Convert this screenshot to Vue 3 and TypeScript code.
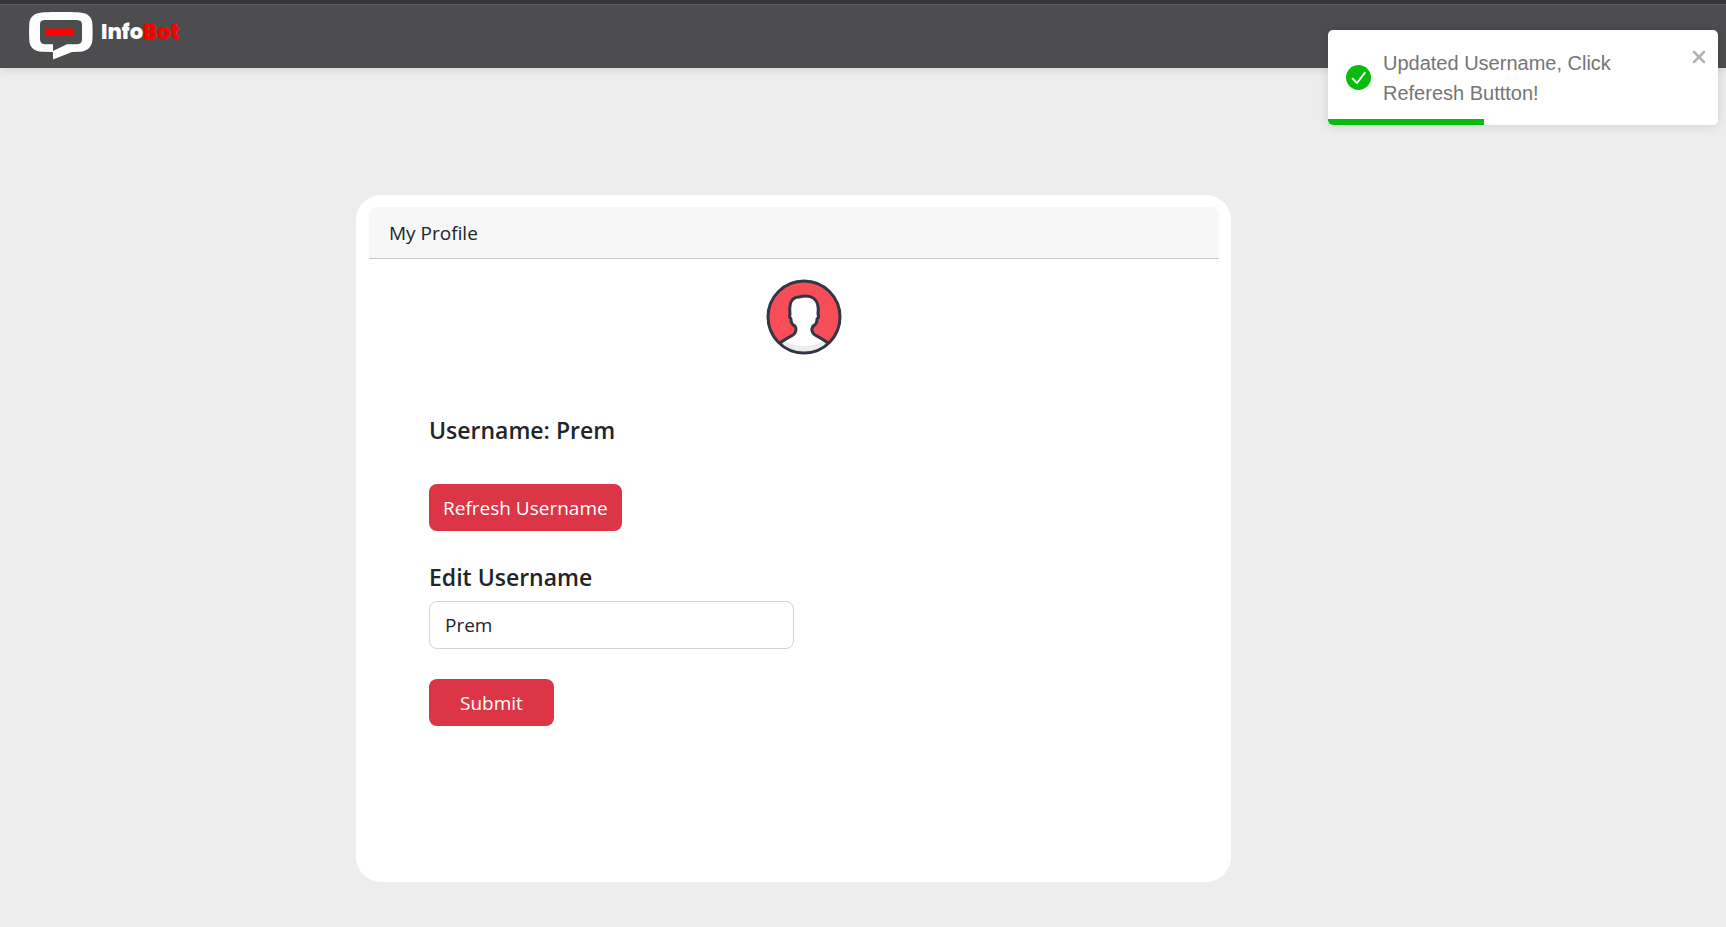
<script setup lang="ts">
import { ref } from 'vue'

const username = ref('Prem')
const draft = ref('Prem')
const toastOpen = ref(true)
const progress = ref(40)

function refreshUsername() {
  username.value = draft.value
}

function submit() {
  toastOpen.value = true
}
</script>

<template>
  <div class="page">
    <header class="navbar">
      <a class="brand" href="#" aria-label="InfoBot">
        <svg class="brand-mark" viewBox="0 0 64 48" aria-hidden="true">
          <path
            fill="#fff"
            fill-rule="evenodd"
            d="M13 0.5C20 -0.2 44 -0.2 51 0.5C59 1.200 63 5 63.400 12C63.700 17 63.700 23 63.400 28C63 35 58 39.500 51 39.800L43 40L24 47.500V40L13 39.800C5 39.500 0.500 35 0.300 28C0 23 0 17 0.300 12C0.700 5 5 1.200 13 0.500ZM15.500 8C12 8.300 11.200 9.500 11 13V27C11.200 30.500 12.500 32 16 32.200H24V39L38 32.200H48C51.500 32 53 30.500 53 27V13C53 9.500 51.500 8.300 48 8Z"
          />
          <rect x="16" y="16.500" width="29" height="7" rx="1" fill="#f00" />
        </svg>
        <span class="brand-name">Info<span class="brand-accent">Bot</span></span>
      </a>
    </header>

    <main class="content">
      <section class="card">
        <h1 class="card-header">My Profile</h1>
        <div class="avatar-row">
          <svg class="avatar" viewBox="0 0 76 76" role="img" aria-label="Profile picture">
            <defs>
              <clipPath id="avatar-disc"><circle cx="38" cy="38" r="36" /></clipPath>
            </defs>
            <g clip-path="url(#avatar-disc)">
              <rect width="76" height="76" fill="#f74d56" />
              <path d="M2 38A36 29 0 0 0 74 38V76H2Z" fill="#e64954" opacity="0.45" />
              <path
                class="figure"
                d="M13 65C17 61 22 59 27 56C30 54 31 50 29 47C26 46 25 43 25 40C23 38 23.500 36 24 35C23 25 25 18 33 18C45 15 54 19 52 35C53 37 52.500 39 51 40C51 43 50 46 47 47C45 51 46 54 49 56C54 59 59 61 63 65L55 78H20Z"
              />
              <path d="M13 65L17 61C30 69 46 69 59 61L63 65L55 77H20Z" fill="#ededee" />
              <path
                class="outline"
                d="M13 65C17 61 22 59 27 56C30 54 31 50 29 47C26 46 25 43 25 40C23 38 23.500 36 24 35C23 25 25 18 33 18C45 15 54 19 52 35C53 37 52.500 39 51 40C51 43 50 46 47 47C45 51 46 54 49 56C54 59 59 61 63 65"
              />
            </g>
            <circle class="outline" cx="38" cy="38" r="36" />
          </svg>
        </div>

        <form class="profile" @submit.prevent="submit">
          <h2 class="heading">Username: {{ username }}</h2>
          <button class="btn refresh" type="button" @click="refreshUsername">Refresh Username</button>
          <label class="heading" for="username">Edit Username</label>
          <input id="username" v-model="draft" class="field" type="text" autocomplete="off" />
          <button class="btn wide" type="submit">Submit</button>
        </form>
      </section>
    </main>

    <div v-if="toastOpen" class="toast" role="alert">
      <svg class="toast-icon" viewBox="0 0 24 24" aria-hidden="true">
        <circle cx="12" cy="12" r="12" fill="#07bc0c" />
        <path d="M6.300 13.200L10.600 17.300L18 7.500" fill="none" stroke="#fff" stroke-width="1.800" stroke-linecap="round" stroke-linejoin="round" />
      </svg>
      <p class="toast-text">Updated Username, Click Referesh Buttton!</p>
      <button class="toast-close" type="button" aria-label="Close" @click="toastOpen = false">
        <svg viewBox="0 0 14 14" aria-hidden="true">
          <path d="M2 2L12 12M12 2L2 12" stroke="#b3b3b3" stroke-width="2.600" stroke-linecap="round" />
        </svg>
      </button>
      <div class="toast-progress" :style="{ width: progress + '%' }"></div>
    </div>
  </div>
</template>

<style>
body {
  background: #ededed;
}
</style>

<style scoped>
.page {
  min-height: 100vh;
  box-sizing: border-box;
  font-family: "Segoe UI", "Open Sans", "Noto Sans", sans-serif;
  font-size: 19px;
  line-height: 30px;
  color: #212529;
}

.navbar {
  box-sizing: border-box;
  height: 68px;
  padding: 8px 29px 0;
  display: flex;
  align-items: flex-start;
  background: #4d4d4f;
  border-top: 4px solid #35363a;
  box-shadow: inset 0 1px #5c5d60, 0 2px 8px rgba(0, 0, 0, 0.1);
}

.brand {
  display: flex;
  gap: 8px;
  text-decoration: none;
}

.brand-mark {
  width: 64px;
  height: 48px;
}

.brand-name {
  padding-top: 5px;
  font-family: Poppins, Inter, sans-serif;
  font-size: 21px;
  font-weight: 800;
  line-height: 30px;
  color: #fff;
}

.brand-accent {
  color: #f00;
}

.content {
  display: flex;
  justify-content: center;
  padding: 127px 139px 45px 0;
}

.card {
  box-sizing: border-box;
  width: 875px;
  max-width: 100%;
  padding: 12px 12px 156px 13px;
  background: #fff;
  border-radius: 25px;
}

.card-header {
  margin: 0;
  padding: 11px 20px 10px;
  font-size: 19px;
  font-weight: 400;
  line-height: 30px;
  background: #f7f7f7;
  border-bottom: 1px solid #c8c8c8;
  border-radius: 8px 8px 0 0;
}

.avatar-row {
  display: flex;
  justify-content: center;
  padding: 20px 0 0 20px;
}

.avatar {
  width: 76px;
  height: 76px;
}

.outline {
  fill: none;
  stroke: #303645;
  stroke-width: 3;
  stroke-linejoin: round;
}

.figure {
  fill: #fff;
}

.profile {
  display: flex;
  flex-direction: column;
  align-items: flex-start;
  padding: 60px 60px 0;
}

.heading {
  margin: 0;
  font-size: 23px;
  font-weight: 600;
  line-height: 30px;
}

.btn {
  min-height: 47px;
  padding: 8px 14px;
  border: 0;
  border-radius: 8px;
  background: #dc3545;
  color: #fff;
  font: inherit;
  cursor: pointer;
}

.refresh {
  margin: 39px 0 31px;
}

.wide {
  margin-top: 30px;
  padding: 8px 31px;
}

.field {
  box-sizing: border-box;
  width: 365px;
  max-width: 100%;
  height: 48px;
  margin-top: 9px;
  padding: 8px 15px;
  border: 1px solid #ced4da;
  border-radius: 8px;
  background: #fff;
  color: #212529;
  font: inherit;
}

.toast {
  position: absolute;
  top: 30px;
  right: 8px;
  box-sizing: border-box;
  width: 390px;
  min-height: 95px;
  padding: 17px 18px;
  display: flex;
  align-items: center;
  gap: 12px;
  overflow: hidden;
  background: #fff;
  border-radius: 5px;
  box-shadow: 0 1px 12px rgba(0, 0, 0, 0.12);
}

.toast-icon {
  flex: none;
  width: 25px;
  height: 25px;
}

.toast-text {
  flex: 1;
  margin: 0;
  font-family: "Liberation Sans", Arial, sans-serif;
  font-size: 20px;
  line-height: 30px;
  color: #757575;
}

.toast-close {
  align-self: flex-start;
  width: 14px;
  height: 18px;
  margin: 1px -6px 0 0;
  padding: 0;
  border: 0;
  background: none;
  cursor: pointer;
}

.toast-close svg {
  display: block;
  width: 14px;
  height: 14px;
}

.toast-progress {
  position: absolute;
  left: 0;
  bottom: 0;
  height: 6px;
  background: #07bc0c;
}
</style>
